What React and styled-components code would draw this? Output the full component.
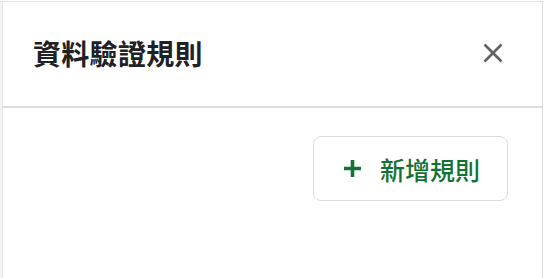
import React from 'react';
import styled, { createGlobalStyle } from 'styled-components';

const GlobalStyle = createGlobalStyle`
  html, body {
    margin: 0;
    padding: 0;
    background: #fff;
  }
  body {
    font-family: "Noto Sans CJK TC", "Noto Sans", Roboto, sans-serif;
  }
`;

const Frame = styled.div`
  width: 544px;
  height: 277px;
  margin-top: 1px;
  border-top: 1px solid #e3e3e3;
  box-sizing: border-box;
  display: flex;
  padding-right: 1px;
`;

const SheetEdge = styled.div`
  width: 3px;
  background: #f3f3f3;
  border-right: 1px solid #e6e6e6;
  box-sizing: border-box;
`;

const Panel = styled.aside`
  flex: 1;
  display: flex;
  flex-direction: column;
  background: #fff;
  border-right: 1px solid #dadce0;
`;

const Header = styled.div`
  height: 106px;
  box-sizing: border-box;
  display: flex;
  align-items: center;
  justify-content: space-between;
  padding: 0 36px 2px 30px;
  border-bottom: 2px solid #dadce0;
`;

const Title = styled.h2`
  margin: 0;
  font-size: 28px;
  font-weight: 700;
  color: #202124;
  letter-spacing: 0.3px;
`;

const CloseButton = styled.button`
  width: 26px;
  height: 26px;
  padding: 0;
  border: none;
  background: none;
  display: flex;
  align-items: center;
  justify-content: center;
  color: #5f6368;
  cursor: pointer;
`;

const Body = styled.div`
  display: flex;
  justify-content: flex-end;
  padding: 28px 34px 0 0;
`;

const AddButton = styled.button`
  width: 195px;
  height: 65px;
  box-sizing: border-box;
  display: flex;
  align-items: center;
  gap: 18px;
  padding: 0 0 0 29px;
  background: #fff;
  border: 1px solid #dadce0;
  border-radius: 8px;
  color: #137333;
  font-family: inherit;
  font-size: 25px;
  font-weight: 500;
  cursor: pointer;
`;

const CloseIcon = () => (
  <svg width="20" height="20" viewBox="0 0 20 20">
    <path d="M1.5 1.5 L18.5 18.5 M18.5 1.5 L1.5 18.5" stroke="currentColor" strokeWidth="2.6" fill="none" />
  </svg>
);

const PlusIcon = () => (
  <svg width="19" height="19" viewBox="0 0 19 19">
    <path d="M9.5 1 V18 M1 9.5 H18" stroke="currentColor" strokeWidth="3.6" fill="none" />
  </svg>
);

export default function App() {
  return (
    <>
      <GlobalStyle />
      <Frame>
        <SheetEdge />
        <Panel>
          <Header>
            <Title>資料驗證規則</Title>
            <CloseButton aria-label="關閉">
              <CloseIcon />
            </CloseButton>
          </Header>
          <Body>
            <AddButton>
              <PlusIcon />
              新增規則
            </AddButton>
          </Body>
        </Panel>
      </Frame>
    </>
  );
}
